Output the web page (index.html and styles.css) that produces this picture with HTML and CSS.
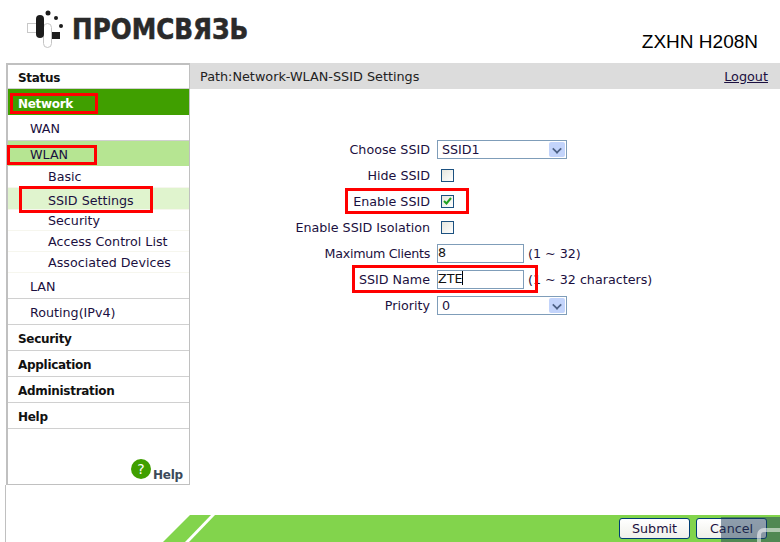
FILE: index.html
```html
<!DOCTYPE html>
<html lang="en">
<head>
    <meta charset="UTF-8">
    <title>ZXHN H208N</title>
    <link rel="stylesheet" href="styles.css">
</head>
<body>

<div class="page">
    <div class="header">
        <div class="logo">
            <svg class="logo-icon" width="40" height="44" viewBox="0 0 40 44">
                <rect x="3.5" y="18.5" width="9" height="9" fill="#fff" stroke="#c8c8c8"/>
                <rect x="19.5" y="18.5" width="8" height="24" rx="4" fill="#fff" stroke="#c4c4c4"/>
                <rect x="12" y="10" width="8" height="23" rx="4" fill="#1c1c1c"/>
                <rect x="28" y="27" width="8" height="7" fill="#1c1c1c"/>
                <circle cx="24" cy="8" r="2.5" fill="#1c1c1c"/>
                <circle cx="32" cy="13" r="2" fill="#1c1c1c"/>
                <circle cx="37" cy="21" r="2" fill="#1c1c1c"/>
            </svg>
            <span class="logo-text">ПРОМСВЯЗЬ</span>
        </div>
        <div class="model">ZXHN H208N</div>
    </div>

    <div class="main">
        <div class="sidebar">
            <ul class="menu">
                <li class="top first">Status</li>
                <li class="top active">Network</li>
                <li class="mid line">WAN</li>
                <li class="mid open">WLAN</li>
                <li class="sub basic">Basic</li>
                <li class="sub current">SSID Settings</li>
                <li class="sub">Security</li>
                <li class="sub">Access Control List</li>
                <li class="sub">Associated Devices</li>
                <li class="mid line">LAN</li>
                <li class="mid line">Routing(IPv4)</li>
                <li class="top line">Security</li>
                <li class="top line">Application</li>
                <li class="top line">Administration</li>
                <li class="top line">Help</li>
            </ul>
            <div class="help-link">
                <span class="help-icon">?</span>
                <span class="help-text">Help</span>
            </div>
        </div>

        <div class="content">
            <div class="path-bar">
                <span>Path:Network-WLAN-SSID Settings</span>
                <a href="#" class="logout">Logout</a>
            </div>
            <form class="form">
                <div class="row">
                    <label>Choose SSID</label>
                    <div class="select"><span>SSID1</span><i class="arrow"></i></div>
                </div>
                <div class="row">
                    <label>Hide SSID</label>
                    <span class="check"></span>
                </div>
                <div class="row">
                    <label>Enable SSID</label>
                    <span class="check">
                        <svg width="9" height="8" viewBox="0 0 9 8"><path d="M1 4l2.5 2.5L8 1" fill="none" stroke="#21a121" stroke-width="2"/></svg>
                    </span>
                </div>
                <div class="row">
                    <label>Enable SSID Isolation</label>
                    <span class="check"></span>
                </div>
                <div class="row">
                    <label class="tight">Maximum Clients</label>
                    <div class="text-input">8</div>
                    <span class="hint">(1 ~ 32)</span>
                </div>
                <div class="row">
                    <label>SSID Name</label>
                    <div class="text-input">ZTE<i class="caret"></i></div>
                    <span class="hint">(1 ~ 32 characters)</span>
                </div>
                <div class="row">
                    <label>Priority</label>
                    <div class="select"><span>0</span><i class="arrow"></i></div>
                </div>
            </form>
        </div>
    </div>

    <div class="footer">
        <svg class="footer-slant" width="64" height="27" viewBox="0 0 64 27">
            <path d="M0 27L27 0h21L22 27z" fill="#82d44c"/>
            <path d="M26 27L52 0h12v27z" fill="#82d44c"/>
        </svg>
        <div class="footer-bar">
            <button type="button" class="btn">Submit</button>
            <button type="button" class="btn">Cancel</button>
        </div>
    </div>

    <!-- red marks drawn over the screenshot -->
    <div class="mark mark-network"></div>
    <div class="mark mark-wlan"></div>
    <div class="mark mark-ssid"></div>
    <div class="mark mark-enable"></div>
    <div class="mark mark-name"></div>
    <div class="watermark"><i class="watermark-ring"></i></div>
</div>

</body>
</html>
```

FILE: styles.css
```css
* {
    box-sizing: border-box;
}
html, body {
    margin: 0;
    padding: 0;
    height: 100%;
    overflow: hidden;
    background-color: #fff;
}
body {
    font-family: "DejaVu Sans", Verdana, sans-serif;
    font-size: 12.7px;
    color: #222;
}
.page {
    position: relative;
    width: 780px;
    height: 542px;
    overflow: hidden;
    display: flex;
    flex-direction: column;
}
.header {
    height: 63px;
    flex: none;
    display: flex;
    justify-content: space-between;
    padding: 0 22px 0 24px;
}
.logo {
    display: flex;
    align-items: flex-start;
    gap: 8px;
}
.logo-icon {
    margin-top: 5px;
}
.logo-text {
    margin-top: 11px;
    font-size: 29px;
    line-height: 36px;
    font-weight: bold;
    color: #2a2a2a;
    -webkit-text-stroke: 0.6px #2a2a2a;
    transform: scaleX(0.85);
    transform-origin: left center;
}
.model {
    margin-top: 30px;
    font-family: "Liberation Sans", Arial, sans-serif;
    font-size: 19px;
    line-height: 23px;
    color: #000;
}
.main {
    display: flex;
    flex: none;
    height: 422px;
    padding-left: 6px;
}
.sidebar {
    width: 184px;
    height: 422px;
    border: 1px solid #c0c0c0;
    border-left-width: 2px;
    border-top-width: 2px;
    display: flex;
    flex-direction: column;
    justify-content: space-between;
}
.menu {
    list-style: none;
    margin: 0;
    padding: 0;
}
.menu li {
    display: flex;
    align-items: center;
    color: #1b1040;
}
.top {
    height: 26px;
    padding-left: 10px;
    padding-top: 2px;
    font-size: 12px;
    font-weight: bold;
    letter-spacing: -0.3px;
    border-bottom: 1px solid #d0d0d0;
}
.menu .top {
    color: #111;
}
.menu .first {
    height: 24px;
}
.menu .active {
    padding-top: 3px;
    background-color: #409f00;
    color: #fff;
    border-bottom: none;
}
.mid {
    height: 25px;
    padding-left: 22px;
    padding-top: 2px;
}
.line {
    height: 26px;
    border-bottom: 1px solid #d0d0d0;
}
.menu .open {
    background-color: #b6e592;
}
.sub {
    height: 21px;
    padding-left: 40px;
    border-bottom: 1px solid #f6f6ee;
}
.menu .basic {
    height: 22px;
    padding-bottom: 1px;
}
.menu .current {
    height: 22px;
    padding-top: 3px;
    background-color: #e0f4ce;
}
.help-link {
    display: flex;
    justify-content: flex-end;
    align-items: flex-end;
    gap: 2px;
    padding: 0 6px 2px 0;
}
.help-icon {
    width: 20px;
    height: 20px;
    margin-bottom: 3px;
    border-radius: 50%;
    background-color: #409f00;
    color: #fff;
    font-size: 14px;
    line-height: 20px;
    text-align: center;
}
.help-text {
    font-size: 12px;
    font-weight: bold;
    letter-spacing: -0.2px;
    color: #3b4a5a;
}
.content {
    flex: 1;
}
.path-bar {
    height: 26px;
    display: flex;
    justify-content: space-between;
    align-items: center;
    padding: 0 12px 0 10px;
    background-color: #dcdcdc;
    font-size: 12.8px;
    color: #222;
}
.logout {
    color: #1b1040;
}
.form {
    padding-top: 47px;
}
.row {
    height: 26px;
    display: flex;
    align-items: center;
    color: #1b1040;
}
.row label {
    width: 240px;
    text-align: right;
    margin-right: 7px;
}
.row .tight {
    letter-spacing: -0.3px;
}
.select {
    width: 130px;
    height: 19px;
    display: flex;
    justify-content: space-between;
    align-items: center;
    padding: 0 1px 0 4px;
    border: 1px solid #7f9db9;
    background-color: #fff;
}
.arrow {
    width: 16px;
    height: 15px;
    display: block;
    position: relative;
    background-color: #c3d4fb;
    border-radius: 2px;
}
.arrow::after {
    content: "";
    position: absolute;
    left: 4px;
    top: 3px;
    width: 6px;
    height: 6px;
    border-right: 2px solid #4d6185;
    border-bottom: 2px solid #4d6185;
    transform: rotate(45deg) scale(0.85);
}
.check {
    width: 13px;
    height: 13px;
    margin-left: 4px;
    display: flex;
    align-items: center;
    justify-content: center;
    border: 1px solid #1c5180;
    background: linear-gradient(135deg, #e6e6de, #fff);
}
.text-input {
    width: 87px;
    height: 19px;
    padding-left: 0;
    border: 1px solid #7f9db9;
    background-color: #fff;
    line-height: 15px;
    color: #111;
}
.caret {
    display: inline-block;
    width: 1px;
    height: 14px;
    vertical-align: -2px;
    background-color: #000;
}
.hint {
    margin-left: 4px;
}
.footer {
    flex: none;
    display: flex;
    align-items: flex-end;
    height: 57px;
    margin-left: 5px;
    padding-left: 157px;
    border-left: 1px solid #c0c0c0;
}
.footer-slant {
    flex: none;
    display: block;
}
.footer-bar {
    flex: 1;
    height: 27px;
    display: flex;
    justify-content: flex-end;
    align-items: center;
    gap: 6px;
    padding-right: 13px;
    background-color: #82d44c;
}
.btn {
    width: 71px;
    height: 21px;
    padding: 0;
    font-family: inherit;
    font-size: 12.7px;
    color: #1b1040;
    border: 1px solid #003c74;
    border-radius: 3px;
    background: linear-gradient(#fff, #f0f0ea);
}
.mark {
    position: absolute;
    border: 3px solid #f00;
}
.mark-network {
    left: 10px;
    top: 93px;
    width: 88px;
    height: 21px;
}
.mark-wlan {
    left: 7px;
    top: 145px;
    width: 90px;
    height: 20px;
}
.mark-ssid {
    left: 19px;
    top: 186px;
    width: 134px;
    height: 27px;
}
.mark-enable {
    left: 345px;
    top: 188px;
    width: 124px;
    height: 26px;
}
.mark-name {
    left: 352px;
    top: 265px;
    width: 186px;
    height: 28px;
}
.watermark {
    position: absolute;
    left: 721px;
    top: 517px;
    width: 59px;
    height: 25px;
    overflow: hidden;
    background-color: rgba(30, 60, 90, 0.5);
}
.watermark-ring {
    position: absolute;
    left: 36px;
    top: 11px;
    width: 30px;
    height: 30px;
    border: 4px solid rgba(255, 255, 255, 0.55);
    border-radius: 7px;
}
```
